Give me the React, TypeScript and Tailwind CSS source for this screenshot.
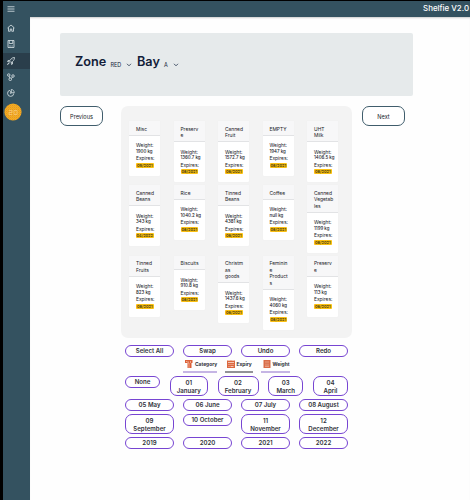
import { useId } from "react";

type Item = { title: string[]; weight: string; expires: string };

const rows: Item[][] = [
  [
    { title: ["Misc"], weight: "1900 kg", expires: "09/2021" },
    { title: ["Preserv", "e"], weight: "1360.7 kg", expires: "08/2021" },
    { title: ["Canned", "Fruit"], weight: "1572.7 kg", expires: "06/2021" },
    { title: ["EMPTY"], weight: "1947 kg", expires: "08/2021" },
    { title: ["UHT", "Milk"], weight: "1406.5 kg", expires: "08/2021" },
  ],
  [
    { title: ["Canned", "Beans"], weight: "343 kg", expires: "04/2022" },
    { title: ["Rice"], weight: "1040.2 kg", expires: "08/2021" },
    { title: ["Tinned", "Beans"], weight: "4381 kg", expires: "06/2021" },
    { title: ["Coffee"], weight: "null kg", expires: "08/2021" },
    { title: ["Canned", "Vegetab", "les"], weight: "1199 kg", expires: "08/2021" },
  ],
  [
    { title: ["Tinned", "Fruits"], weight: "823 kg", expires: "08/2021" },
    { title: ["Biscuits"], weight: "910.8 kg", expires: "08/2021" },
    { title: ["Christm", "as", "goods"], weight: "1437.6 kg", expires: "06/2021" },
    { title: ["Feminin", "e", "Product", "s"], weight: "4060 kg", expires: "08/2021" },
    { title: ["Preserv", "e"], weight: "113 kg", expires: "06/2021" },
  ],
];

function Card({ item }: { item: Item }) {
  return (
    <div className="w-[31px] rounded-[1px] bg-white shadow-[0_0_1px_rgba(0,0,0,0.06)]">
      <div className="bg-[#f7f7f8] pt-[4.5px] pb-[3.5px] pl-[7px] shadow-[inset_0_-1px_0_#e2e3e5]">
        {item.title.map((line) => (
          <div key={line} className="whitespace-nowrap">
            {line}
          </div>
        ))}
      </div>
      <div className="h-[40px] pt-[6.5px] pl-[7px] whitespace-nowrap">
        <div>Weight:</div>
        <div className="text-[4.4px] font-medium">{item.weight}</div>
        <div>Expires:</div>
        <div className="mt-[1px] h-[5px] w-[17.5px] rounded-[1px] bg-[#fbc012] text-center text-[3.9px] leading-[5px] font-semibold text-[#3a3015]">
          {item.expires}
        </div>
      </div>
    </div>
  );
}

function Pill({ lines, className }: { lines: string[]; className: string }) {
  return (
    <button
      className={`rounded-[7px] border border-[#7745d2] bg-white text-center text-[6.1px] leading-[8px] font-semibold text-[#30323a] ${
        lines.length > 1 ? "h-[20px] pt-px" : "h-[12px]"
      } flex flex-col items-center justify-center whitespace-nowrap ${className}`}
    >
      {lines.map((l) => (
        <span key={l}>{l}</span>
      ))}
    </button>
  );
}

function Chevron({ className }: { className: string }) {
  return (
    <svg viewBox="0 0 6 4" className={`h-[4px] w-[6px] ${className}`} fill="none" stroke="#35455c" strokeWidth="0.9">
      <path d="M1 .8 3 2.8 5 .8" />
    </svg>
  );
}

function NavIcon({ name }: { name: string }) {
  return (
    <svg viewBox="0 0 16 16" className="size-[8px]" fill="none" stroke="#dce5e9" strokeWidth="1.6" strokeLinejoin="round">
      {name === "menu" && <path d="M1 3.5h14M1 8h14M1 12.5h14" />}
      {name === "home" && <path d="M1 8 8 2l7 6M3 7v7.5h3.5V10h3v4.5H13V7" />}
      {name === "save" && <path d="M2 1h12v14H2zM4.5 1v6h7V1M4.5 12h3M9 12h2.5" />}
      {name === "rocket" && (
        <path d="M15 1c-5 0-8 3-10 7l3 3c4-2 7-5 7-10ZM5 7H2L1 9l4 .5M8.500 11l.5 4 2-1v-4M4 11l-3 4 4-3M10 5l1 1" />
      )}
      {name === "nodes" && (
        <>
          <circle cx="3.500" cy="4" r="2.500" />
          <circle cx="12" cy="6" r="2.500" />
          <circle cx="6.500" cy="12.500" r="2.700" />
          <path d="m4.500 6.500 1 3.500M11 8 8.500 11" />
        </>
      )}
      {name === "pie" && <path d="M6 2.500A6.200 6.200 0 1 0 13.500 9M8.500 1v6.500H14.500C14.500 4 12 1 8.500 1ZM7.500 4v6" />}
    </svg>
  );
}

function Avatar() {
  const id = useId();
  return (
    <svg viewBox="0 0 18 18" className="mt-[2px] ml-[1px] size-[18px]">
      <defs>
        <pattern id={id} width="2" height="2" patternUnits="userSpaceOnUse">
          <rect width="2" height="2" fill="#f3b51c" />
          <rect width="1" height="1" fill="#e58d2d" />
          <rect x="1" y="1" width="1" height="1" fill="#ed9f24" />
        </pattern>
      </defs>
      <circle cx="9" cy="9" r="8.600" fill={`url(#${id})`} />
      <path d="M5 7.500h3v2H5v2h3M10 11.500v-4h3v4z" fill="none" stroke="#f5c773" strokeWidth=".8" />
    </svg>
  );
}

function FilterIcon({ kind }: { kind: string }) {
  return (
    <svg viewBox="0 0 8 8" className="size-[8px] shrink-0">
      {kind === "Category" && (
        <>
          <path d="M0 0h7.500v3H6.500v5H2.500V3H0z" fill="#dc6038" />
          <path d="M3 1v2h1v5M5.500 1v2M1 1.500h1" stroke="#f8d6c5" strokeWidth=".6" fill="none" />
        </>
      )}
      {kind === "Expiry" && (
        <>
          <path d="M0 .5h8V8H0z" fill="#dc6840" />
          <path
            d="M1 2.500h6M1.500 4.500h1M3.500 4.500h1M5.500 4.500h1M1.500 6.500h1M3.500 6.500h3M2 0v1M6 0v1"
            stroke="#fff0e8"
            strokeWidth=".7"
          />
        </>
      )}
      {kind === "Weight" && (
        <>
          <path d="M.5 0h7v8h-7z" fill="#d96c47" />
          <path d="M2 2h4M3 3.500v2.500M5 3.500v2.500M2 6.500h4" stroke="#edb59e" strokeWidth=".7" />
        </>
      )}
    </svg>
  );
}

function Filter({ kind, className }: { kind: string; className: string }) {
  return (
    <div
      className={`flex h-[14px] items-start gap-[2px] border-b-2 pt-[1px] text-[4.900px] leading-[8px] font-bold text-[#30323a] ${className}`}
    >
      <FilterIcon kind={kind} />
      <span>{kind}</span>
    </div>
  );
}

export default function App() {
  return (
    <div className="h-[500px] w-[470px] overflow-hidden bg-black pt-px pl-[3px] font-['Inter',sans-serif] text-[#17191f]">
      <header className="flex h-[16px] items-center justify-between bg-[#345260] pr-[1px] pl-[4px]">
        <NavIcon name="menu" />
        <span className="text-[7.900px] leading-none font-medium whitespace-nowrap text-white">Shelfie V2.0</span>
      </header>
      <div className="flex h-[483px]">
        <aside className="w-[27px] shrink-0 bg-[#345260] pt-[3px]">
          {["home", "save", "rocket", "nodes", "pie"].map((name) => (
            <div
              key={name}
              className={`flex h-[16.300px] items-center pl-[3.500px] ${name === "rocket" ? "bg-[#2a3e4b]" : ""}`}
            >
              <NavIcon name={name} />
            </div>
          ))}
          <Avatar />
        </aside>
        <main className="grow bg-[#fefefe] pt-[16px] pl-[30px] shadow-[inset_0_2px_2px_-1px_rgba(0,0,0,0.2)]">
          <section className="flex h-[63px] w-[353px] items-start rounded-[2px] bg-[#e6eaeb] pt-[20px] pl-[15px] text-[#131d39]">
            <h1 className="w-[35.500px] text-[12.700px] leading-[18px] font-semibold whitespace-nowrap">Zone</h1>
            <span className="mt-[7.500px] w-[15.500px] text-[5.500px] leading-[8px]">RED</span>
            <Chevron className="mt-[10px]" />
            <h1 className="ml-[5px] w-[27px] text-[12.700px] leading-[18px] font-semibold">Bay</h1>
            <span className="mt-[7.500px] w-[9px] text-[5.500px] leading-[8px]">A</span>
            <Chevron className="mt-[10px]" />
          </section>
          <div className="mt-[10px] flex items-start">
            <button className="h-[20px] w-[43px] rounded-[7px] border border-[#405d6c] bg-white pt-px text-[5.600px] leading-[18px]">
              Previous
            </button>
            <section className="ml-[18px] flex h-[232px] w-[231px] flex-col gap-[3px] rounded-[7px] bg-[#f3f3f3] pt-[15px] pl-[8px] text-[4.900px] leading-[6.500px]">
              {rows.map((row, i) => (
                <div key={i} className="flex items-start gap-[13.500px]">
                  {row.map((item, j) => (
                    <Card key={j} item={item} />
                  ))}
                </div>
              ))}
            </section>
            <button className="ml-[10px] h-[20px] w-[43px] rounded-[7px] border border-[#405d6c] bg-white pt-px text-[5.600px] leading-[18px]">
              Next
            </button>
          </div>
          <div className="mt-[7px] ml-[65px] w-[223px]">
            <div className="flex justify-between">
              {["Select All", "Swap", "Undo", "Redo"].map((t) => (
                <Pill key={t} lines={[t]} className="w-[49px]" />
              ))}
            </div>
            <div className="mt-[2px] ml-[58px] flex">
              <Filter kind="Category" className="w-[34px] border-[#c5b5e4] pl-[2px]" />
              <Filter kind="Expiry" className="ml-[8px] w-[28px] border-[#929297] pl-[1.500px]" />
              <Filter kind="Weight" className="ml-[8px] w-[29px] border-[#c5b5e4] pl-[1.500px]" />
            </div>
            <div className="mt-[3px] flex items-start justify-between">
              <Pill lines={["None"]} className="w-[35px]" />
              <Pill lines={["01", "January"]} className="w-[38px]" />
              <Pill lines={["02", "February"]} className="w-[41px]" />
              <Pill lines={["03", "March"]} className="w-[35px]" />
              <Pill lines={["04", "April"]} className="w-[35px]" />
            </div>
            <div className="mt-[3px] grid grid-cols-[repeat(4,49px)] items-start justify-between gap-y-[3px]">
              <Pill lines={["05 May"]} className="" />
              <Pill lines={["06 June"]} className="" />
              <Pill lines={["07 July"]} className="" />
              <Pill lines={["08 August"]} className="" />
              <Pill lines={["09", "September"]} className="" />
              <Pill lines={["10 October"]} className="" />
              <Pill lines={["11", "November"]} className="" />
              <Pill lines={["12", "December"]} className="" />
              <Pill lines={["2019"]} className="" />
              <Pill lines={["2020"]} className="" />
              <Pill lines={["2021"]} className="" />
              <Pill lines={["2022"]} className="" />
            </div>
          </div>
        </main>
      </div>
    </div>
  );
}
